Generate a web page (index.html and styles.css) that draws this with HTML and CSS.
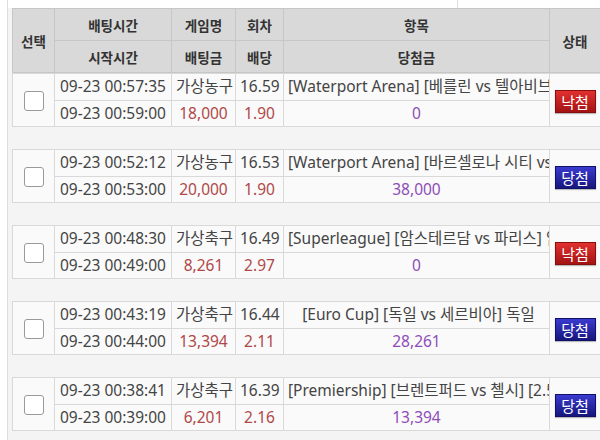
FILE: index.html
```html
<!DOCTYPE html>
<html lang="ko">
<head>
<meta charset="utf-8">
<link rel="stylesheet" href="styles.css">
</head>
<body>
<div class="wrap">
  <div class="top"><div class="top-left"></div><div class="top-right"></div></div>
  <table class="grid head">
    <colgroup><col class="c1"><col class="c2"><col class="c3"><col class="c4"><col class="c5"><col class="c6"></colgroup>
    <tr><th rowspan="2">선택</th><th>배팅시간</th><th>게임명</th><th>회차</th><th>항목</th><th rowspan="2">상태</th></tr>
    <tr><th>시작시간</th><th>배팅금</th><th>배당</th><th>당첨금</th></tr>
  </table>

  <table class="grid bet first">
    <colgroup><col class="c1"><col class="c2"><col class="c3"><col class="c4"><col class="c5"><col class="c6"></colgroup>
    <tr><td rowspan="2"><span class="chk"></span></td><td>09-23 00:57:35</td><td>가상농구</td><td>16.59</td><td class="item"><div class="clip">[Waterport Arena] [베를린 vs 텔아비브</div></td><td rowspan="2"><span class="badge lose">낙첨</span></td></tr>
    <tr><td>09-23 00:59:00</td><td class="red">18,000</td><td class="red">1.90</td><td class="win">0</td></tr>
  </table>

  <table class="grid bet">
    <colgroup><col class="c1"><col class="c2"><col class="c3"><col class="c4"><col class="c5"><col class="c6"></colgroup>
    <tr><td rowspan="2"><span class="chk"></span></td><td>09-23 00:52:12</td><td>가상농구</td><td>16.53</td><td class="item"><div class="clip">[Waterport Arena] [바르셀로나 시티 vs</div></td><td rowspan="2"><span class="badge win-b">당첨</span></td></tr>
    <tr><td>09-23 00:53:00</td><td class="red">20,000</td><td class="red">1.90</td><td class="win">38,000</td></tr>
  </table>

  <table class="grid bet">
    <colgroup><col class="c1"><col class="c2"><col class="c3"><col class="c4"><col class="c5"><col class="c6"></colgroup>
    <tr><td rowspan="2"><span class="chk"></span></td><td>09-23 00:48:30</td><td>가상축구</td><td>16.49</td><td class="item"><div class="clip">[Superleague] [암스테르담 vs 파리스] 암</div></td><td rowspan="2"><span class="badge lose">낙첨</span></td></tr>
    <tr><td>09-23 00:49:00</td><td class="red">8,261</td><td class="red">2.97</td><td class="win">0</td></tr>
  </table>

  <table class="grid bet">
    <colgroup><col class="c1"><col class="c2"><col class="c3"><col class="c4"><col class="c5"><col class="c6"></colgroup>
    <tr><td rowspan="2"><span class="chk"></span></td><td>09-23 00:43:19</td><td>가상축구</td><td>16.44</td><td class="item"><div class="clip">[Euro Cup] [독일 vs 세르비아] 독일</div></td><td rowspan="2"><span class="badge win-b">당첨</span></td></tr>
    <tr><td>09-23 00:44:00</td><td class="red">13,394</td><td class="red">2.11</td><td class="win">28,261</td></tr>
  </table>

  <table class="grid bet">
    <colgroup><col class="c1"><col class="c2"><col class="c3"><col class="c4"><col class="c5"><col class="c6"></colgroup>
    <tr><td rowspan="2"><span class="chk"></span></td><td>09-23 00:38:41</td><td>가상축구</td><td>16.39</td><td class="item"><div class="clip">[Premiership] [브렌트퍼드 vs 첼시] [2.5</div></td><td rowspan="2"><span class="badge win-b">당첨</span></td></tr>
    <tr><td>09-23 00:39:00</td><td class="red">6,201</td><td class="red">2.16</td><td class="win">13,394</td></tr>
  </table>
</div>
</body>
</html>
```

FILE: styles.css
```css
html, body {
  margin: 0;
  padding: 0;
  background: #ffffff;
  overflow: hidden;
}
body {
  font-family: "Noto Sans", "Noto Sans CJK KR", sans-serif;
  color: #444;
}
.wrap {
  margin-left: 7px;
  border-left: 1px solid #dcdcdc;
  background: #f4f4f4;
  height: 440px;
  width: 593px;
  overflow: hidden;
}
.top {
  display: flex;
  height: 8px;
  background: #fff;
}
.top-left { width: 449px; }
.top-right { flex: 1; border-left: 1px solid #dcdcdc; }
.grid {
  margin-left: 4px;
  border-collapse: collapse;
  table-layout: fixed;
  width: 588px;
}
.c1 { width: 42px; }
.c2 { width: 117px; }
.c3 { width: 64px; }
.c4 { width: 48px; }
.c5 { width: 266px; }
.c6 { width: 51px; }
.head th {
  background: #d9d9d9;
  border: 1px solid #c6c6c6;
  font-family: "Noto Sans CJK KR", sans-serif;
  font-weight: 700;
  font-size: 13.5px;
  color: #333;
  height: 31px;
  padding: 0;
  text-align: center;
}
.bet { margin-top: 22px; }
.bet.first { margin-top: 0; }
.bet td {
  background: #fafafa;
  border: 1px solid #d9d9d9;
  height: 25.5px;
  padding: 0 4px;
  font-size: 15.5px;
  text-align: center;
  white-space: nowrap;
  overflow: hidden;
  line-height: 25px;
}
.bet td:first-child { padding: 0; }
.bet td:last-child { padding: 0; }
.bet td.item { padding: 0 0 0 4px; }
.clip { overflow: hidden; white-space: nowrap; text-align: center; }
.red { color: #b04848; }
.win { color: #8f4db8; }
.chk {
  display: inline-block;
  width: 18px;
  height: 18px;
  border: 1px solid #9a9a9a;
  border-radius: 3px;
  background: #fff;
  vertical-align: middle;
}
.badge {
  display: inline-block;
  width: 39px;
  height: 21px;
  line-height: 21px;
  font-family: "Noto Sans CJK KR", sans-serif;
  font-size: 15px;
  color: #fff;
  text-align: center;
  vertical-align: middle;
  box-shadow: 0 1px 1px rgba(0,0,0,0.25);
}
.lose {
  background: linear-gradient(#e2302e, #a31414);
  border: 1px solid #8a0e0e;
}
.win-b {
  background: linear-gradient(#3a3ad0, #16167e);
  border: 1px solid #101068;
}
```
